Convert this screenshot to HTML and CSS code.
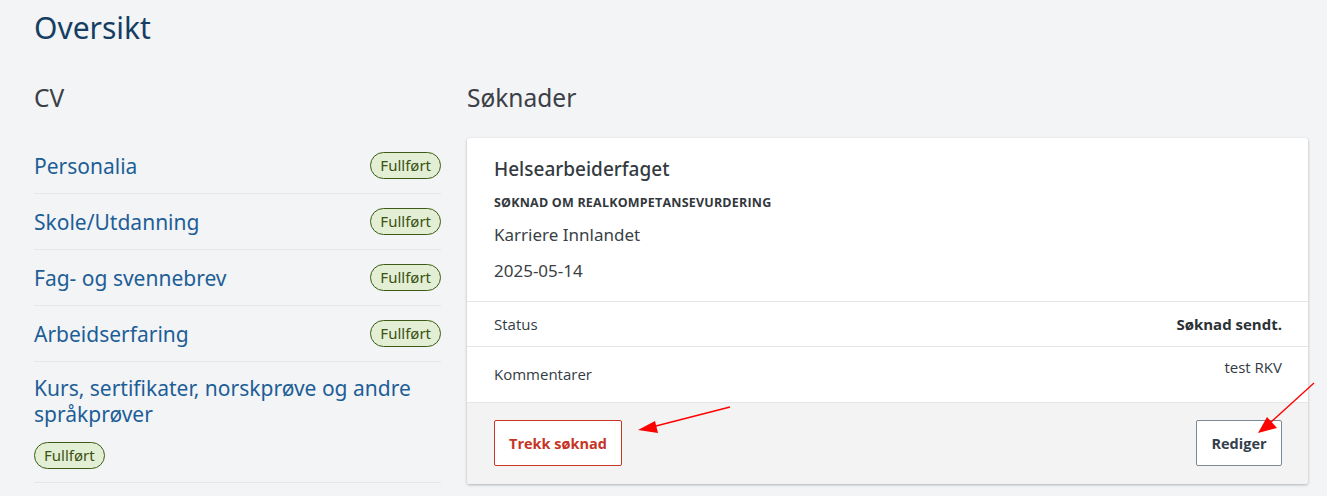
FILE: index.html
```html
<!DOCTYPE html>
<html lang="no">
<head>
<meta charset="utf-8">
<title>Oversikt</title>
<link rel="stylesheet" href="styles.css">
</head>
<body>
<main class="page">
  <h1 class="page-title">Oversikt</h1>
  <div class="columns">
    <section class="cv">
      <h2 class="section-title">CV</h2>
      <ul class="cv-list">
        <li class="cv-item"><a class="cv-link" href="#">Personalia</a><span class="badge">Fullført</span></li>
        <li class="cv-item"><a class="cv-link" href="#">Skole/Utdanning</a><span class="badge">Fullført</span></li>
        <li class="cv-item"><a class="cv-link" href="#">Fag- og svennebrev</a><span class="badge">Fullført</span></li>
        <li class="cv-item"><a class="cv-link" href="#">Arbeidserfaring</a><span class="badge">Fullført</span></li>
        <li class="cv-item cv-item-stacked"><a class="cv-link" href="#">Kurs, sertifikater, norskprøve og andre språkprøver</a><span class="badge">Fullført</span></li>
      </ul>
    </section>
    <section class="apps">
      <h2 class="section-title">Søknader</h2>
      <article class="card">
        <div class="card-head">
          <h3 class="card-title">Helsearbeiderfaget</h3>
          <div class="card-kind">SØKNAD OM REALKOMPETANSEVURDERING</div>
          <div class="card-line">Karriere Innlandet</div>
          <div class="card-line">2025-05-14</div>
        </div>
        <div class="card-row">
          <span class="row-label">Status</span>
          <span class="row-value row-strong">Søknad sendt.</span>
        </div>
        <div class="card-row card-row-tall">
          <span class="row-label row-label-low">Kommentarer</span>
          <span class="row-value">test RKV</span>
        </div>
        <div class="card-foot">
          <button class="btn btn-danger" type="button">Trekk søknad</button>
          <button class="btn btn-plain" type="button">Rediger</button>
        </div>
      </article>
    </section>
  </div>
  <svg class="annotations" width="1327" height="496" viewBox="0 0 1327 496" aria-hidden="true">
    <line x1="730" y1="407" x2="652" y2="427" stroke="#ff0000" stroke-width="1.3"/>
    <polygon points="638,430 655,421 658,433" fill="#ff0000"/>
    <line x1="1314" y1="383" x2="1270" y2="423" stroke="#ff0000" stroke-width="1.3"/>
    <polygon points="1258,433 1267,417 1277,428" fill="#ff0000"/>
  </svg>
</main>
</body>
</html>
```
FILE: styles.css
```css
* { box-sizing: border-box; }
html, body { margin: 0; padding: 0; }
body {
  background: #f3f4f6;
  font-family: "Noto Sans", "Open Sans", sans-serif;
  color: #333;
}
.page {
  position: relative;
  width: 1327px;
  height: 496px;
  overflow: hidden;
  padding: 8px 19px 0 34px;
}
.page-title {
  margin: 0;
  font-weight: 400;
  font-size: 30px;
  line-height: 40px;
  color: #163e62;
}
.columns {
  display: grid;
  grid-template-columns: 407px 1fr;
  column-gap: 26px;
  margin-top: 35px;
}
.section-title {
  margin: 0;
  font-weight: 400;
  font-size: 24.5px;
  line-height: 30px;
  color: #3b4046;
  height: 55px;
}
.cv-list { list-style: none; margin: 0; padding: 0; }
.cv-item {
  display: flex;
  align-items: center;
  justify-content: space-between;
  height: 56px;
  border-bottom: 1px solid #e4e6e9;
}
.cv-item-stacked {
  flex-direction: column;
  align-items: flex-start;
  justify-content: flex-start;
  height: auto;
  padding: 13px 0 13px;
}
.cv-link {
  color: #1d5e97;
  text-decoration: none;
  font-size: 21px;
  line-height: 26px;
}
.cv-item-stacked .cv-link { margin-bottom: 15px; }
.badge {
  display: inline-block;
  height: 27px;
  line-height: 25px;
  padding: 0 9px;
  border: 1px solid #3d5b14;
  border-radius: 14px;
  background: #e3efd5;
  color: #3b5212;
  font-size: 15px;
}
.card {
  background: #fff;
  border-radius: 3px;
  box-shadow: 0 1px 3px rgba(0,0,0,0.28);
  overflow: hidden;
}
.card-head {
  padding: 18px 26px 16px 27px;
  border-bottom: 1px solid #e6e6e6;
}
.card-title {
  margin: 0;
  font-weight: 500;
  font-size: 19px;
  line-height: 26px;
  color: #333a40;
}
.card-kind {
  margin-top: 12px;
  font-family: "Open Sans", sans-serif;
  font-weight: 700;
  font-size: 12.5px;
  line-height: 18px;
  letter-spacing: 0.2px;
  color: #33383d;
}
.card-line {
  margin-top: 9px;
  font-size: 17px;
  line-height: 28px;
  color: #3a3f45;
}
.card-line + .card-line { margin-top: 8px; }
.card-row {
  display: flex;
  justify-content: space-between;
  align-items: center;
  height: 45px;
  padding: 0 26px 0 27px;
  border-bottom: 1px solid #e6e6e6;
  font-family: "Open Sans", sans-serif;
  font-size: 15px;
  color: #333b44;
}
.card-row-tall {
  height: 56px;
  align-items: flex-start;
  padding-top: 10px;
}
.row-label-low { padding-top: 7px; }
.row-strong { font-weight: 700; color: #2c3136; }
.card-foot {
  display: flex;
  justify-content: space-between;
  background: #f3f3f3;
  padding: 17px 26px 18px 27px;
}
.btn {
  height: 46px;
  background: #fff;
  border-radius: 2px;
  font-family: "Open Sans", sans-serif;
  font-weight: 700;
  font-size: 14.5px;
  padding: 0 14px;
  cursor: pointer;
}
.btn-danger {
  border: 1px solid #c93520;
  color: #c63424;
  width: 128px;
}
.btn-plain {
  border: 1px solid #7c8894;
  color: #34404c;
  width: 86px;
}
.annotations {
  position: absolute;
  left: 0;
  top: 0;
  pointer-events: none;
}
```
